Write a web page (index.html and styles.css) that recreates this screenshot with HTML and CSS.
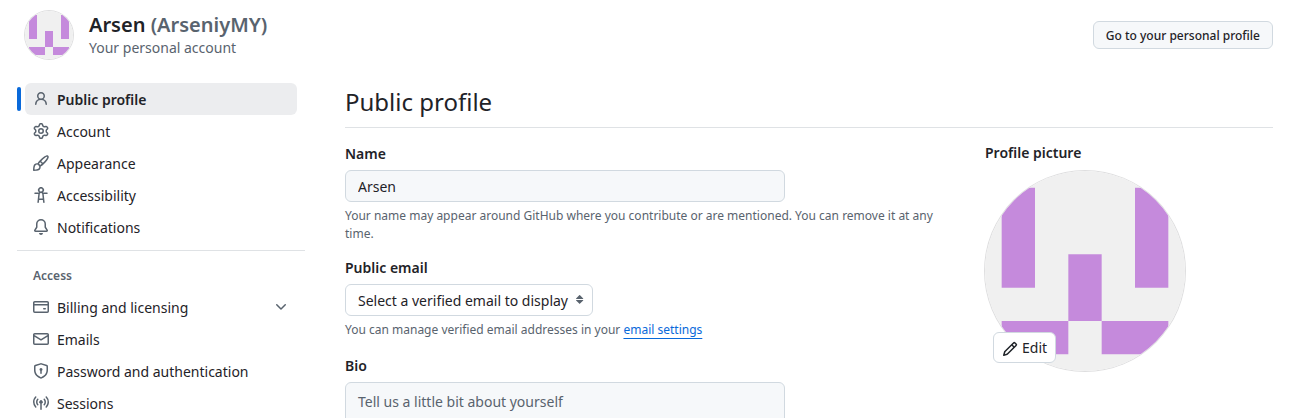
FILE: index.html
```html
<!DOCTYPE html>
<html lang="en">
<head>
<meta charset="utf-8">
<title>Public profile</title>
<link rel="stylesheet" href="styles.css">
</head>
<body>
<svg class="defs" aria-hidden="true">
  <symbol id="identicon" viewBox="0 0 420 420">
    <rect width="420" height="420" fill="#f0f0f0"/>
    <path fill="#c58adc" d="M35 35h70v210H35zM315 35h70v210h-70zM175 175h70v140h-70zM35 315h140v70H35zM245 315h140v70H245z"/>
  </symbol>
</svg>
<header class="header">
  <svg class="avatar avatar-small"><use href="#identicon"/></svg>
  <div class="identity">
    <h1 class="identity-name">Arsen <span class="muted">(ArseniyMY)</span></h1>
    <p class="identity-note muted">Your personal account</p>
  </div>
  <button class="button profile-button">Go to your personal profile</button>
</header>
<div class="layout">
  <nav class="sidebar">
    <ul class="nav-list">
      <li class="nav-item nav-current">
        <svg class="icon" viewBox="0 0 16 16"><path d="M10.561 8.073a6.005 6.005 0 0 1 3.432 5.142.75.75 0 1 1-1.498.07 4.5 4.5 0 0 0-8.99 0 .75.75 0 0 1-1.498-.07 6.004 6.004 0 0 1 3.431-5.142 3.999 3.999 0 1 1 5.123 0ZM10.5 5a2.5 2.5 0 1 0-5 0 2.5 2.5 0 0 0 5 0Z"/></svg>
        <span>Public profile</span>
      </li>
      <li class="nav-item">
        <svg class="icon" viewBox="0 0 16 16"><path d="M8 0a8.2 8.2 0 0 1 .701.031C9.444.095 9.99.645 10.16 1.29l.288 1.107c.018.066.079.158.212.224.231.114.454.243.668.386.123.082.233.09.299.071l1.103-.303c.644-.176 1.392.021 1.82.63.27.385.506.792.704 1.218.315.675.111 1.422-.364 1.891l-.814.806c-.049.048-.098.147-.088.294.016.257.016.515 0 .772-.01.147.038.246.088.294l.814.806c.475.469.679 1.216.364 1.891a7.977 7.977 0 0 1-.704 1.217c-.428.61-1.176.807-1.82.63l-1.102-.302c-.067-.019-.177-.011-.3.071a5.909 5.909 0 0 1-.668.386c-.133.066-.194.158-.211.224l-.29 1.106c-.168.646-.715 1.196-1.458 1.26a8.006 8.006 0 0 1-1.402 0c-.743-.064-1.289-.614-1.458-1.26l-.289-1.106c-.018-.066-.079-.158-.212-.224a5.738 5.738 0 0 1-.668-.386c-.123-.082-.233-.09-.299-.071l-1.103.303c-.644.176-1.392-.021-1.82-.63a8.12 8.12 0 0 1-.704-1.218c-.315-.675-.111-1.422.363-1.891l.815-.806c.05-.048.098-.147.088-.294a6.214 6.214 0 0 1 0-.772c.01-.147-.038-.246-.088-.294l-.815-.806C.635 6.045.431 5.298.746 4.623a7.92 7.92 0 0 1 .704-1.217c.428-.61 1.176-.807 1.82-.63l1.102.302c.067.019.177.011.3-.071.214-.143.437-.272.668-.386.133-.066.194-.158.211-.224l.29-1.106C6.009.645 6.556.095 7.299.03 7.53.01 7.764 0 8 0Zm-.571 1.525c-.036.003-.108.036-.137.146l-.289 1.105c-.147.561-.549.967-.998 1.189-.173.086-.34.183-.5.29-.417.278-.97.423-1.529.27l-1.103-.303c-.109-.03-.175.016-.195.045-.22.312-.412.644-.573.99-.014.031-.021.11.059.19l.815.806c.411.406.562.957.53 1.456a4.709 4.709 0 0 0 0 .582c.032.499-.119 1.05-.53 1.456l-.815.806c-.081.08-.073.159-.059.19.162.346.353.677.573.989.02.03.085.076.195.046l1.102-.303c.56-.153 1.113-.008 1.53.27.161.107.328.204.501.29.447.222.85.629.997 1.189l.289 1.105c.029.109.101.143.137.146a6.6 6.6 0 0 0 1.142 0c.036-.003.108-.036.137-.146l.289-1.105c.147-.561.549-.967.998-1.189.173-.086.34-.183.5-.29.417-.278.97-.423 1.529-.27l1.103.303c.109.029.175-.016.195-.045.22-.313.411-.644.573-.99.014-.031.021-.11-.059-.19l-.815-.806c-.411-.406-.562-.957-.53-1.456a4.709 4.709 0 0 0 0-.582c-.032-.499.119-1.05.53-1.456l.815-.806c.081-.08.073-.159.059-.19a6.464 6.464 0 0 0-.573-.989c-.02-.03-.085-.076-.195-.046l-1.102.303c-.56.153-1.113.008-1.53-.27a4.44 4.44 0 0 0-.501-.29c-.447-.222-.85-.629-.997-1.189l-.289-1.105c-.029-.11-.101-.143-.137-.146a6.6 6.6 0 0 0-1.142 0ZM11 8a3 3 0 1 1-6 0 3 3 0 0 1 6 0ZM9.5 8a1.5 1.5 0 1 0-3.001.001A1.5 1.5 0 0 0 9.5 8Z"/></svg>
        <span>Account</span>
      </li>
      <li class="nav-item">
        <svg class="icon" viewBox="0 0 16 16"><path d="M11.134 1.535c.7-.509 1.416-.942 2.076-1.155.649-.21 1.463-.267 2.069.34.603.601.568 1.411.368 2.07-.202.668-.624 1.39-1.125 2.096-1.011 1.424-2.496 2.987-3.775 4.249-1.098 1.084-2.132 1.839-3.04 2.3a3.744 3.744 0 0 1-1.055 3.217c-.431.431-1.065.691-1.657.861-.614.177-1.294.287-1.914.357A21.151 21.151 0 0 1 .797 16H.743a.75.75 0 0 1-.743-.743v-.054a21.25 21.25 0 0 1 .13-2.284c.067-.647.187-1.287.358-1.914.17-.591.43-1.226.86-1.657a3.746 3.746 0 0 1 3.227-1.054c.466-.893 1.225-1.907 2.314-2.982 1.271-1.255 2.833-2.75 4.245-3.777ZM1.62 13.089c-.051.464-.086.929-.104 1.395.466-.018.932-.053 1.396-.104a10.511 10.511 0 0 0 1.668-.309c.526-.151.856-.325 1.011-.48a2.25 2.25 0 1 0-3.182-3.182c-.155.155-.329.485-.48 1.01a10.515 10.515 0 0 0-.309 1.67Zm10.396-10.34c-1.224.89-2.605 2.189-3.822 3.384l1.718 1.718c1.21-1.205 2.51-2.597 3.387-3.833.47-.662.78-1.227.912-1.662.134-.444.032-.551.009-.575h-.001V1.78c-.014-.014-.113-.113-.548.027-.432.14-.995.462-1.655.942Zm-4.832 7.266-.001.001a9.859 9.859 0 0 0 1.63-1.142L7.155 7.216a9.7 9.7 0 0 0-1.161 1.607c.482.302.889.71 1.19 1.192Z"/></svg>
        <span>Appearance</span>
      </li>
      <li class="nav-item">
        <svg class="icon" viewBox="0 0 16 16"><path d="M9.923 5.302c.063.063.122.129.178.198H14A.75.75 0 0 1 14 7h-3.3l.578 5.163.362 2.997a.75.75 0 0 1-1.49.18L9.868 13H6.132l-.282 2.34a.75.75 0 0 1-1.49-.18l.362-2.997L5.3 7H2a.75.75 0 0 1 0-1.5h3.9a2.54 2.54 0 0 1 .176-.198 3 3 0 1 1 3.847 0ZM9.2 7.073h-.001a1.206 1.206 0 0 0-2.398 0L6.305 11.5h3.39ZM9.5 3a1.5 1.5 0 1 0-3.001.001A1.5 1.5 0 0 0 9.5 3Z"/></svg>
        <span>Accessibility</span>
      </li>
      <li class="nav-item">
        <svg class="icon" viewBox="0 0 16 16"><path d="M8 16a2 2 0 0 0 1.985-1.75c.017-.137-.097-.25-.235-.25h-3.5c-.138 0-.252.113-.235.25A2 2 0 0 0 8 16ZM3 5a5 5 0 0 1 10 0v2.947c0 .05.015.098.042.139l1.703 2.555A1.519 1.519 0 0 1 13.482 13H2.518a1.516 1.516 0 0 1-1.263-2.36l1.703-2.554A.255.255 0 0 0 3 7.947Zm5-3.5A3.5 3.5 0 0 0 4.5 5v2.947c0 .346-.102.683-.294.97l-1.703 2.556a.017.017 0 0 0-.003.01l.001.006c0 .002.002.004.004.006l.006.004.007.001h10.964l.007-.001.006-.004.004-.006.001-.007a.017.017 0 0 0-.003-.01l-1.703-2.554a1.745 1.745 0 0 1-.294-.97V5A3.5 3.5 0 0 0 8 1.5Z"/></svg>
        <span>Notifications</span>
      </li>
    </ul>
    <h2 class="nav-heading muted">Access</h2>
    <ul class="nav-list">
      <li class="nav-item">
        <svg class="icon" viewBox="0 0 16 16"><path d="M10.75 9a.75.75 0 0 0 0 1.5h1.5a.75.75 0 0 0 0-1.5h-1.5Z"/><path d="M0 3.75C0 2.784.784 2 1.75 2h12.5c.966 0 1.75.784 1.75 1.75v8.5A1.75 1.75 0 0 1 14.25 14H1.75A1.75 1.75 0 0 1 0 12.25ZM14.5 6.5h-13v5.75c0 .138.112.25.25.25h12.5a.25.25 0 0 0 .25-.25Zm0-2.75a.25.25 0 0 0-.25-.25H1.75a.25.25 0 0 0-.25.25V5h13Z"/></svg>
        <span>Billing and licensing</span>
        <svg class="icon chevron" viewBox="0 0 16 16"><path d="M12.78 5.22a.749.749 0 0 1 0 1.06l-4.25 4.25a.749.749 0 0 1-1.06 0L3.22 6.28a.749.749 0 1 1 1.06-1.06L8 8.939l3.72-3.719a.749.749 0 0 1 1.06 0Z"/></svg>
      </li>
      <li class="nav-item">
        <svg class="icon" viewBox="0 0 16 16"><path d="M1.75 2h12.5c.966 0 1.75.784 1.75 1.75v8.5A1.75 1.75 0 0 1 14.25 14H1.75A1.75 1.75 0 0 1 0 12.25v-8.5C0 2.784.784 2 1.75 2ZM1.5 12.251c0 .138.112.25.25.25h12.5a.25.25 0 0 0 .25-.25V5.809L8.38 9.397a.75.75 0 0 1-.76 0L1.5 5.809v6.442Zm13-8.181v-.32a.25.25 0 0 0-.25-.25H1.75a.25.25 0 0 0-.25.25v.32L8 7.88Z"/></svg>
        <span>Emails</span>
      </li>
      <li class="nav-item">
        <svg class="icon" viewBox="0 0 16 16"><path d="m8.533.133 5.25 1.68A1.75 1.75 0 0 1 15 3.48V7c0 1.566-.32 3.182-1.303 4.682-.983 1.498-2.585 2.813-5.032 3.855a1.697 1.697 0 0 1-1.33 0c-2.447-1.042-4.049-2.357-5.032-3.855C1.32 10.182 1 8.566 1 7V3.48a1.75 1.75 0 0 1 1.217-1.667l5.25-1.68a1.748 1.748 0 0 1 1.066 0Zm-.61 1.429.001.001-5.25 1.68a.251.251 0 0 0-.174.237V7c0 1.36.275 2.666 1.057 3.859.784 1.194 2.121 2.342 4.366 3.298a.196.196 0 0 0 .154 0c2.245-.957 3.582-2.103 4.366-3.297C13.225 9.666 13.5 8.358 13.5 7V3.48a.25.25 0 0 0-.174-.238l-5.25-1.68a.25.25 0 0 0-.153 0ZM9.5 6.5c0 .536-.286 1.032-.75 1.3v2.45a.75.75 0 0 1-1.5 0V7.8A1.5 1.5 0 1 1 9.5 6.5Z"/></svg>
        <span>Password and authentication</span>
      </li>
      <li class="nav-item">
        <svg class="icon" viewBox="0 0 16 16"><path d="M8.75 8.582v5.668a.75.75 0 0 1-1.5 0V8.582a1.75 1.75 0 1 1 1.5 0Zm3.983-7.125a.75.75 0 0 1 1.06.026A7.976 7.976 0 0 1 16 7c0 2.139-.84 4.083-2.207 5.517a.75.75 0 1 1-1.086-1.034A6.474 6.474 0 0 0 14.5 7a6.474 6.474 0 0 0-1.793-4.483.75.75 0 0 1 .026-1.06Zm-9.466 0c.3.286.312.76.026 1.06A6.474 6.474 0 0 0 1.5 7a6.47 6.47 0 0 0 1.793 4.483.75.75 0 0 1-1.086 1.034A7.973 7.973 0 0 1 0 7c0-2.139.84-4.083 2.207-5.517a.75.75 0 0 1 1.06-.026Zm8.556 2.321A4.988 4.988 0 0 1 13 7a4.988 4.988 0 0 1-1.177 3.222.75.75 0 1 1-1.146-.967A3.487 3.487 0 0 0 11.5 7c0-.86-.309-1.645-.823-2.255a.75.75 0 0 1 1.146-.967Zm-6.492.958A3.48 3.48 0 0 0 4.5 7a3.48 3.48 0 0 0 .823 2.255.75.75 0 0 1-1.146.967A4.981 4.981 0 0 1 3 7a4.982 4.982 0 0 1 1.188-3.236.75.75 0 1 1 1.143.972Z"/></svg>
        <span>Sessions</span>
      </li>
    </ul>
  </nav>
  <main class="main">
    <h2 class="title">Public profile</h2>
    <div class="columns">
      <form class="form">
        <div class="field">
          <label class="label" for="name">Name</label>
          <input class="control" id="name" type="text" value="Arsen">
          <p class="hint muted">Your name may appear around GitHub where you contribute or are mentioned. You can remove it at any time.</p>
        </div>
        <div class="field field-email">
          <span class="label">Public email</span>
          <div class="control select">
            <span>Select a verified email to display</span>
            <svg class="icon select-arrow" viewBox="0 0 16 16"><path d="m4.074 9.427 3.396 3.396a.25.25 0 0 0 .354 0l3.396-3.396A.25.25 0 0 0 11.043 9H4.251a.25.25 0 0 0-.177.427ZM4.074 7.47 7.47 4.073a.25.25 0 0 1 .354 0L11.22 7.47a.25.25 0 0 1-.177.426H4.251a.25.25 0 0 1-.177-.426Z"/></svg>
          </div>
          <p class="hint muted">You can manage verified email addresses in your <a class="link" href="#">email settings</a></p>
        </div>
        <div class="field">
          <label class="label" for="bio">Bio</label>
          <textarea class="control bio" id="bio" placeholder="Tell us a little bit about yourself"></textarea>
        </div>
      </form>
      <section class="picture">
        <h3 class="label picture-label">Profile picture</h3>
        <div class="picture-frame">
          <svg class="avatar avatar-large"><use href="#identicon"/></svg>
          <button class="edit" type="button">
            <svg class="icon" viewBox="0 0 16 16"><path d="M11.013 1.427a1.75 1.75 0 0 1 2.474 0l1.086 1.086a1.75 1.75 0 0 1 0 2.474l-8.61 8.61c-.21.21-.47.364-.756.445l-3.251.93a.75.75 0 0 1-.927-.928l.929-3.25c.081-.286.235-.547.445-.758l8.61-8.61Zm.176 4.823L9.75 4.81l-6.286 6.287a.253.253 0 0 0-.064.108l-.558 1.953 1.953-.558a.253.253 0 0 0 .108-.064Zm1.238-3.763a.25.25 0 0 0-.354 0L10.811 3.75l1.439 1.44 1.263-1.263a.25.25 0 0 0 0-.354Z"/></svg>
            <span>Edit</span>
          </button>
        </div>
      </section>
    </div>
  </main>
</div>
</body>
</html>
```
FILE: styles.css
```css
* {
  box-sizing: border-box;
}

body {
  margin: 0;
  height: 418px;
  overflow: hidden;
  background: #fff;
  color: #1f2328;
  font-family: "Noto Sans", sans-serif;
  font-size: 14px;
  line-height: 21px;
}

h1, h2, h3, p, ul {
  margin: 0;
  padding: 0;
}

button, input, textarea {
  margin: 0;
  color: inherit;
  font-family: inherit;
}

.defs {
  display: none;
}

.muted {
  color: #59636e;
}

.icon {
  display: block;
  flex: none;
  width: 16px;
  height: 16px;
  fill: #59636e;
}

.header {
  display: flex;
  align-items: flex-start;
  padding: 11px 17px 0 25px;
  height: 83px;
}

.avatar {
  display: block;
  flex: none;
  border-radius: 50%;
  box-shadow: 0 0 0 1px #1f232826;
}

.avatar-small {
  width: 48px;
  height: 48px;
}

.avatar-large {
  width: 200px;
  height: 200px;
}

.identity {
  flex: 1;
  margin-left: 16px;
}

.identity-name {
  margin-top: -1px;
  font-size: 20px;
  font-weight: 600;
  line-height: 30px;
}

.identity-note {
  margin-top: -3px;
}

.button {
  border: 1px solid #d1d9e0;
  border-radius: 6px;
  background: #f6f8fa;
  font-size: 12px;
  font-weight: 500;
}

.profile-button {
  margin-top: 10px;
  padding: 2px 12px 0;
  height: 28px;
  line-height: 20px;
}

.layout {
  display: flex;
  align-items: flex-start;
  gap: 40px;
  padding: 0 17px;
}

.sidebar {
  flex: none;
  width: 288px;
}

.nav-list {
  padding: 0 8px;
  list-style: none;
}

.nav-item {
  position: relative;
  display: flex;
  align-items: center;
  gap: 8px;
  padding: 0 8px;
  height: 32px;
  border-radius: 6px;
}

.nav-current {
  background: #ecedef;
  font-weight: 600;
}

.nav-current::before {
  content: "";
  position: absolute;
  left: -8px;
  top: 4px;
  width: 4px;
  height: 24px;
  border-radius: 6px;
  background: #0969da;
}

.nav-heading {
  margin-top: 7px;
  padding: 16px 16px 6px;
  border-top: 1px solid #dfe2e5;
  font-size: 12px;
  font-weight: 600;
  line-height: 18px;
}

.chevron {
  margin-left: auto;
}

.main {
  flex: 1;
}

.title {
  height: 45px;
  border-bottom: 1px solid #dfe2e5;
  font-size: 24px;
  font-weight: 400;
  line-height: 38px;
}

.columns {
  display: flex;
  gap: 48px;
}

.form {
  width: 592px;
  padding-top: 15px;
}

.field {
  margin-bottom: 14px;
}

.field-email {
  margin-bottom: 16px;
}

.label {
  display: block;
  margin-bottom: 6px;
  font-size: 14px;
  font-weight: 600;
  line-height: 21px;
}

.control {
  display: block;
  width: 440px;
  height: 32px;
  padding: 5px 12px;
  border: 1px solid #d1d9e0;
  border-radius: 6px;
  background: #f6f8fa;
  font-size: 14px;
  line-height: 20px;
}

.select {
  display: flex;
  justify-content: space-between;
  width: 248px;
  padding: 6px 4px 4px 12px;
  background: #fff;
}

.bio {
  height: 80px;
  padding: 8px 12px;
  line-height: 21px;
  resize: none;
}

.bio::placeholder {
  color: #59636e;
}

.hint {
  margin-top: 5px;
  font-size: 12px;
  line-height: 18px;
}

.link {
  color: #0969da;
  text-decoration: underline;
  text-decoration-skip-ink: none;
  text-underline-offset: 4px;
}

.picture {
  padding-top: 14px;
}

.picture-label {
  margin-bottom: 8px;
}

.picture-frame {
  position: relative;
}

.edit {
  position: absolute;
  left: 8px;
  bottom: 8px;
  display: flex;
  align-items: center;
  gap: 4px;
  height: 31px;
  padding: 0 8px;
  border: 1px solid #d1d9e0;
  border-radius: 6px;
  background: #fff;
  font-size: 14px;
  line-height: 21px;
}

.edit .icon {
  margin-top: 2px;
  fill: #1f2328;
}
```
